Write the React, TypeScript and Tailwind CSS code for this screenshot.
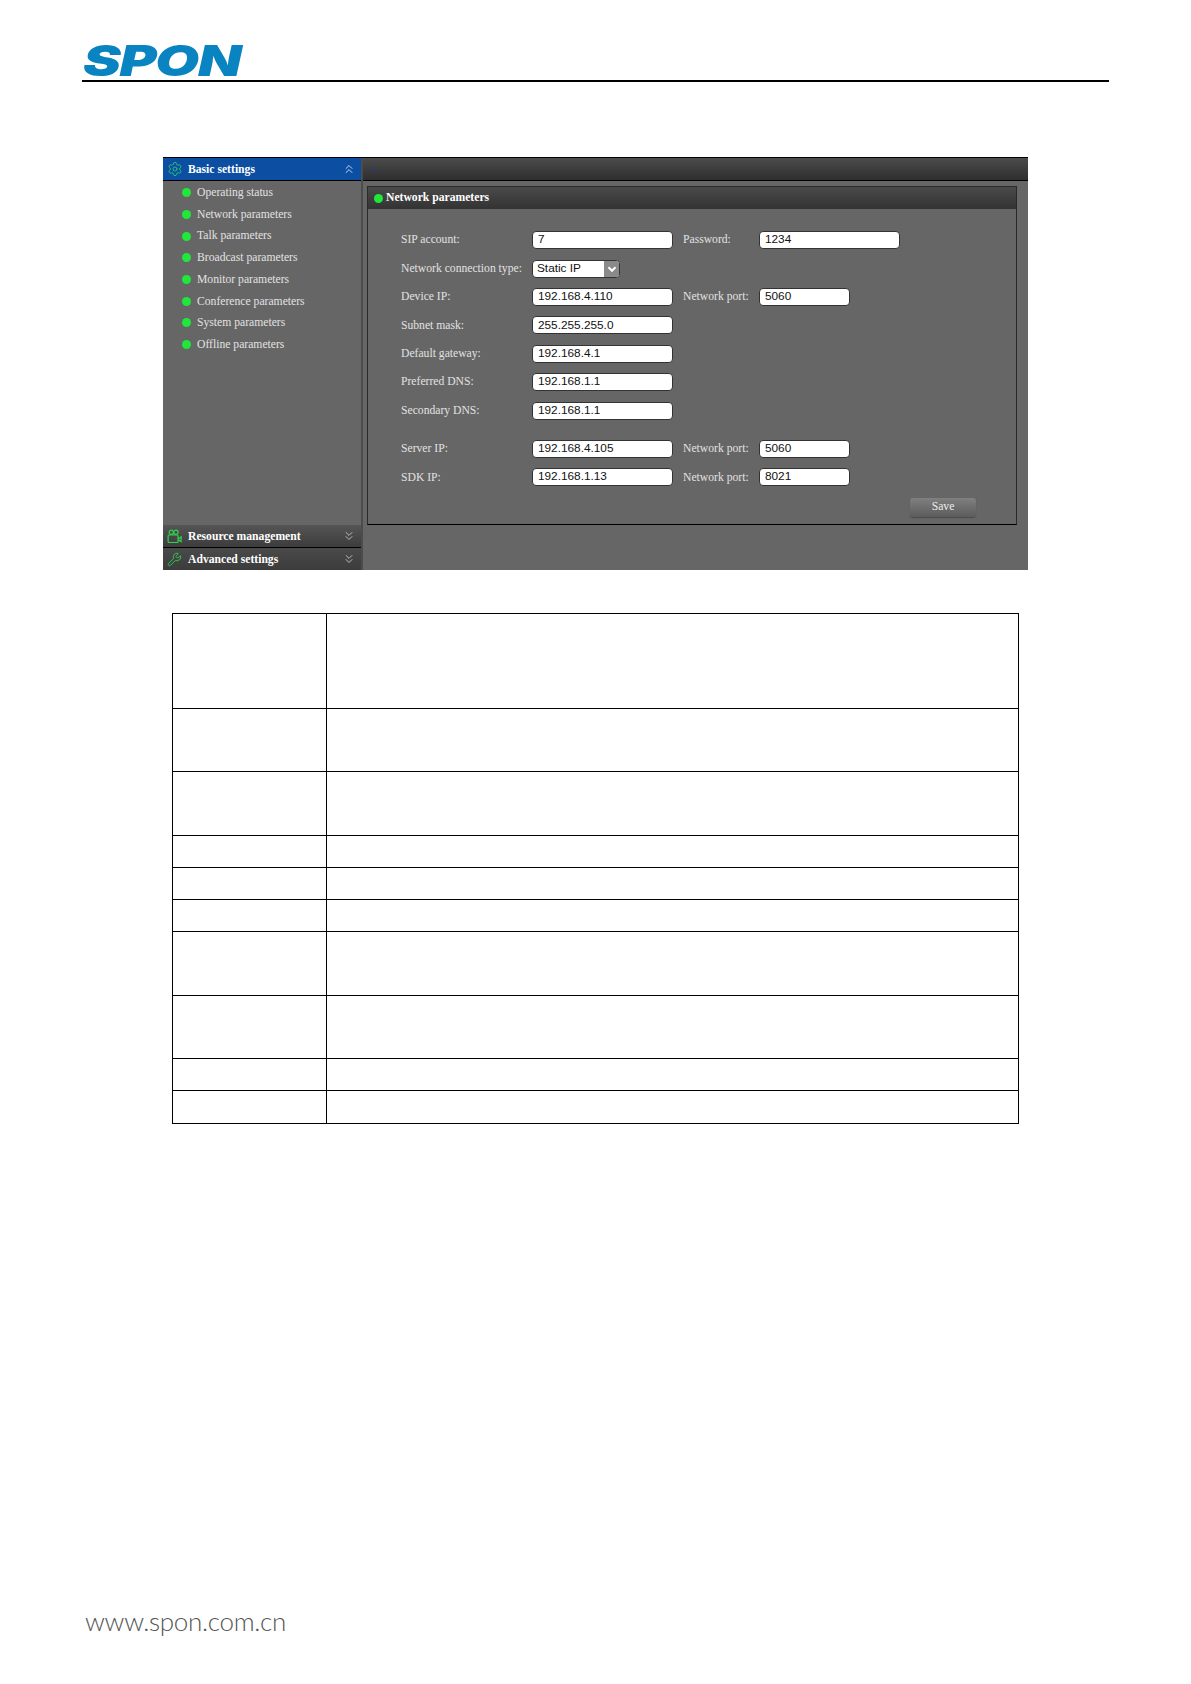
import { ChevronsDown, ChevronsUp, Settings, Wrench } from "lucide-react";

const menu = [
  "Operating status",
  "Network parameters",
  "Talk parameters",
  "Broadcast parameters",
  "Monitor parameters",
  "Conference parameters",
  "System parameters",
  "Offline parameters",
];

const tableRows = [95, 63, 64, 32, 32, 32, 64, 63, 32, 33];

function Field({ value, wide }: { value: string; wide: "long" | "short" }) {
  return (
    <div
      className={`flex h-[18px] items-center rounded-[4px] border border-[#333] bg-white pl-[5px] font-['Liberation_Sans',sans-serif] text-[11.8px] text-[#111] ${
        wide === "long" ? "w-[141px]" : "w-[91px]"
      }`}
    >
      {value}
    </div>
  );
}

function Row({
  label,
  value,
  label2,
  value2,
  wide2 = "short",
}: {
  label: string;
  value: string;
  label2?: string;
  value2?: string;
  wide2?: "long" | "short";
}) {
  return (
    <div className="flex h-[28.4px] items-center">
      <div className="w-[131px] shrink-0">{label}</div>
      <Field value={value} wide="long" />
      {label2 && value2 ? (
        <>
          <div className="ml-[10px] w-[76px] shrink-0">{label2}</div>
          <Field value={value2} wide={wide2} />
        </>
      ) : null}
    </div>
  );
}

function CameraIcon() {
  return (
    <svg viewBox="0 0 16 16" className="h-[15px] w-[15px] text-[#2bd64a]" fill="none" stroke="currentColor" strokeWidth="1.3">
      <circle cx="4.6" cy="3.4" r="2.3" />
      <circle cx="9.6" cy="3.4" r="2.3" />
      <rect x="1.2" y="6.4" width="10.6" height="8" rx="1" />
      <path d="M12 10.4 15 8.4v5l-3-2" />
    </svg>
  );
}

function Dot({ className = "" }: { className?: string }) {
  return <span className={`block h-[9px] w-[9px] shrink-0 rounded-full bg-[#1fe83a] ${className}`} />;
}

export default function App() {
  return (
    <div className="flex h-[1684px] w-[1191px] flex-col overflow-hidden bg-white font-['Liberation_Serif',serif]">
      <header className="ml-[82px] mt-[40px] w-[1027px] border-b-2 border-black pl-[1px]">
        <div className="mt-[1px] h-[39px] origin-left scale-x-[1.35] font-['Inter',sans-serif] text-[42px] font-black italic leading-[40px] tracking-[-1px] text-[#0a84c1]">
          SPON
        </div>
      </header>

      <section className="ml-[163px] mt-[75px] flex h-[413px] w-[865px] border-t border-black bg-[#666] text-[11.65px] text-[#e2e2e2]">
        <aside className="flex w-[200px] shrink-0 flex-col border-r-2 border-[#4c4c4c]">
          <div className="flex h-[23px] items-center border-b border-black bg-[#0b4ea2] pl-[4px] pr-[5px] font-bold text-white">
            <Settings className="h-[16px] w-[16px] text-[#25c96a]" strokeWidth={1.4} />
            <span className="ml-[5px] flex-1 pt-[1px]">Basic settings</span>
            <ChevronsUp className="h-[14px] w-[14px] text-[#dfe8f5]" strokeWidth={1.5} />
          </div>
          <ul className="flex-1 pt-[1px]">
            {menu.map((m) => (
              <li key={m} className="flex h-[21.7px] items-center gap-[6px] pl-[19px]">
                <Dot />
                <span>{m}</span>
              </li>
            ))}
          </ul>
          <div className="flex h-[23px] items-center border-b border-black bg-gradient-to-b from-[#555] to-[#3c3c3c] pl-[4px] pr-[5px] font-bold text-white">
            <CameraIcon />
            <span className="ml-[6px] flex-1 pt-[1px]">Resource management</span>
            <ChevronsDown className="h-[14px] w-[14px] text-[#ccc]" strokeWidth={1.5} />
          </div>
          <div className="flex h-[22px] items-center bg-gradient-to-b from-[#4a4a4a] to-[#3c3c3c] pl-[4px] pr-[5px] font-bold text-white">
            <Wrench className="h-[15px] w-[15px] text-[#2bd64a]" strokeWidth={1.4} />
            <span className="ml-[6px] flex-1 pt-[1px]">Advanced settings</span>
            <ChevronsDown className="h-[14px] w-[14px] text-[#ccc]" strokeWidth={1.5} />
          </div>
        </aside>

        <main className="flex min-w-0 flex-1 flex-col">
          <div className="flex h-[23px] items-center border-b border-black bg-gradient-to-b from-[#4c4c4c] to-[#2e2e2e] pl-[9px]">
            <span className="block h-[3px] w-[3px] rounded-full bg-[#1c3f8c]" />
          </div>
          <div className="ml-[4px] mr-[11px] mt-[5px] h-[339px] border border-[#2a2a2a] border-b-black">
            <div className="flex h-[22px] items-center gap-[3px] bg-gradient-to-b from-[#4a4a4a] to-[#333] pl-[6px] font-bold text-white">
              <Dot />
              <span>Network parameters</span>
            </div>
            <div className="pl-[33px] pt-[17px]">
              <Row label="SIP account:" value="7" label2="Password:" value2="1234" wide2="long" />
              <div className="flex h-[28.4px] items-center">
                <div className="w-[131px] shrink-0">Network connection type:</div>
                <div className="flex h-[18px] w-[88px] overflow-hidden rounded-[4px] border border-[#333] bg-white font-['Liberation_Sans',sans-serif] text-[11.8px] text-[#111]">
                  <span className="flex flex-1 items-center pl-[4px]">Static IP</span>
                  <span className="flex w-[15px] items-center justify-center bg-[#8a8a8a]">
                    <svg viewBox="0 0 10 10" className="h-[10px] w-[10px]" fill="none" stroke="white" strokeWidth="2">
                      <path d="M1.5 3.2 5 6.8l3.5-3.6" />
                    </svg>
                  </span>
                </div>
              </div>
              <Row label="Device IP:" value="192.168.4.110" label2="Network port:" value2="5060" />
              <Row label="Subnet mask:" value="255.255.255.0" />
              <Row label="Default gateway:" value="192.168.4.1" />
              <Row label="Preferred DNS:" value="192.168.1.1" />
              <Row label="Secondary DNS:" value="192.168.1.1" />
              <div className="mt-[10px]">
                <Row label="Server IP:" value="192.168.4.105" label2="Network port:" value2="5060" />
                <Row label="SDK IP:" value="192.168.1.13" label2="Network port:" value2="8021" />
              </div>
              <div className="mr-[40px] mt-[6px] flex justify-end">
                <div className="flex h-[19px] w-[66px] items-center justify-center rounded-[3px] bg-gradient-to-b from-[#808080] to-[#5c5c5c] text-[#eee] shadow-[0_1px_1px_#4a4a4a]">
                  Save
                </div>
              </div>
            </div>
          </div>
        </main>
      </section>

      <table className="ml-[172px] mt-[43px] w-[847px] table-fixed border-collapse">
        <colgroup>
          <col className="w-[154px]" />
          <col />
        </colgroup>
        <tbody>
          {tableRows.map((h, i) => (
            <tr key={i} style={{ height: `${h}px` }}>
              <td className="border border-black p-0" />
              <td className="border border-black p-0" />
            </tr>
          ))}
        </tbody>
      </table>

      <footer className="ml-[85px] mt-auto pb-[46px] font-['Lato',sans-serif] text-[26px] font-light leading-[34px] tracking-[-0.3px] text-[#555]">
        www.spon.com.cn
      </footer>
    </div>
  );
}
